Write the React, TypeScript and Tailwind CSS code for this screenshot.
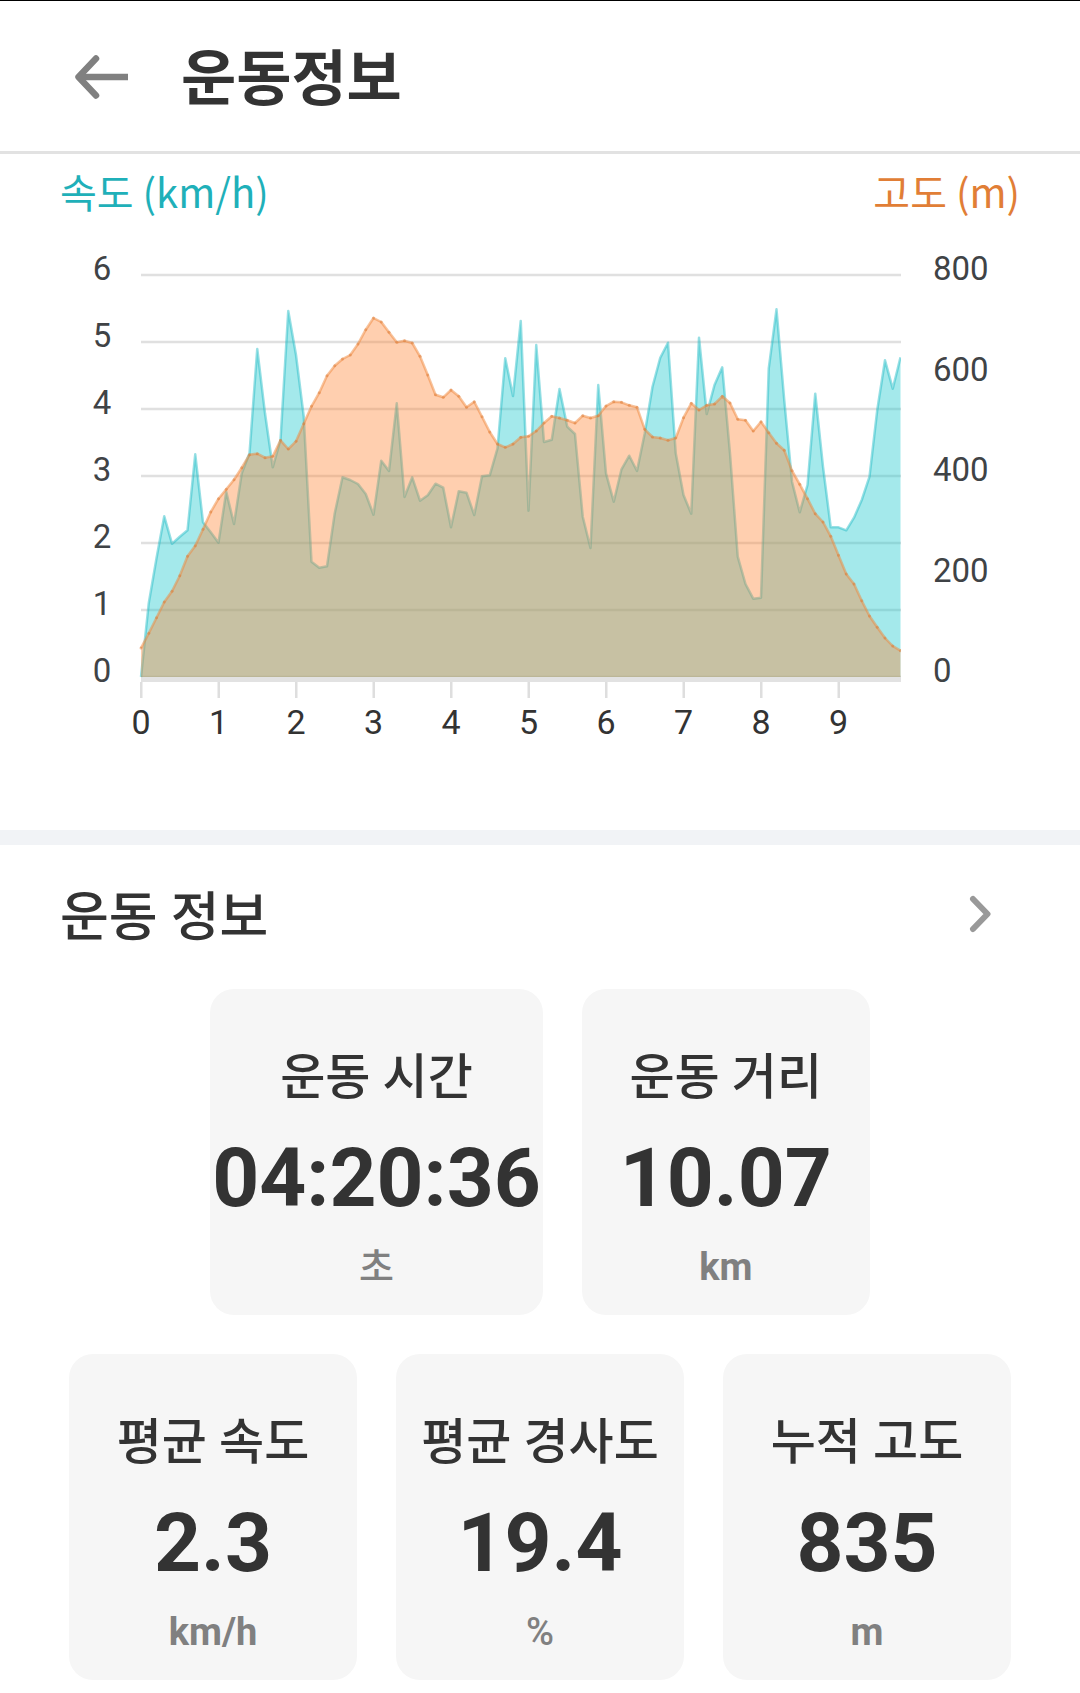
const PLOT = { left: 141, right: 901, top: 275, bottom: 677 };
const SAMPLE_STEP = 7.75;
const UNIT = 3;

// One sample every 0.1 km, as a depth below y = 240 in thirds of a chart unit.
const speed = [
  1311, 1090, 955, 829, 911, 890, 871, 643, 847, 877, 908, 755, 852, 700, 640, 327, 520, 682, 600, 213,
  345, 530, 965, 983, 979, 820, 712, 720, 732, 762, 824, 662, 693, 490, 771, 712, 782, 766, 731, 743,
  862, 754, 758, 825, 709, 706, 625, 355, 468, 243, 812, 315, 606, 599, 447, 560, 582, 830, 924, 435,
  700, 785, 688, 647, 693, 580, 440, 353, 308, 640, 765, 821, 293, 522, 435, 382, 640, 950, 1032, 1076,
  1073, 385, 208, 480, 725, 817, 735, 461, 680, 862, 862, 871, 833, 780, 710, 510, 361, 446, 352,
];

const altitude = [
  1224, 1180, 1133, 1086, 1054, 1007, 949, 917, 868, 816, 776, 748, 719, 683, 644, 641, 653, 649, 601, 627,
  604, 551, 499, 458, 407, 377, 357, 345, 312, 269, 234, 246, 277, 307, 302, 309, 349, 405, 464, 472,
  450, 469, 502, 485, 530, 576, 612, 622, 612, 592, 589, 573, 549, 529, 534, 541, 549, 527, 534, 527,
  498, 485, 487, 496, 502, 568, 591, 594, 601, 594, 533, 490, 510, 496, 492, 469, 489, 538, 541, 573,
  545, 578, 610, 631, 692, 733, 776, 821, 846, 889, 946, 1002, 1032, 1082, 1128, 1162, 1194, 1218, 1232,
];

const toPoints = (data: number[]) => data.map((d, i) => [PLOT.left + i * SAMPLE_STEP, 240 + d / UNIT]);
const toLine = (data: number[]) => toPoints(data).map(([x, y]) => `${x},${y.toFixed(1)}`).join(" ");
const toArea = (data: number[]) =>
  `${PLOT.left},${PLOT.bottom} ${toLine(data)} ${PLOT.left + (data.length - 1) * SAMPLE_STEP},${PLOT.bottom}`;

function Chart() {
  return (
    <svg viewBox="0 230 1080 520" className="block w-full" role="img" aria-label="속도와 고도 그래프">
      <defs>
        <clipPath id="plot">
          <rect x={PLOT.left - 2} y="240" width={PLOT.right - PLOT.left + 2} height="438" />
        </clipPath>
      </defs>
      {[0, 1, 2, 3, 4, 5, 6].map((v) => (
        <g key={v}>
          <line
            x1={PLOT.left}
            x2={PLOT.right}
            y1={PLOT.bottom - v * 67}
            y2={PLOT.bottom - v * 67}
            className="stroke-[#e0e0e0]"
            strokeWidth="2.5"
          />
          <text x="102" y={682 - v * 67} textAnchor="middle" className="fill-[#3f4346] text-[33px]">
            {v}
          </text>
        </g>
      ))}
      <rect x={PLOT.left} y="677" width={PLOT.right - PLOT.left} height="5" className="fill-[#e2e2e2]" />
      {[0, 1, 2, 3, 4, 5, 6, 7, 8, 9].map((v) => (
        <g key={v}>
          <rect x={PLOT.left - 1 + v * 77.5} y="682" width="2.5" height="16" className="fill-[#dedede]" />
          <text
            x={PLOT.left + v * 77.5}
            y="734"
            textAnchor="middle"
            className="fill-[#333333] text-[34px]"
          >
            {v}
          </text>
        </g>
      ))}
      {[0, 200, 400, 600, 800].map((v) => (
        <text key={v} x="933" y={682 - v * 0.5025} className="fill-[#3f4346] text-[33px]">
          {v}
        </text>
      ))}
      <g clipPath="url(#plot)" strokeWidth="2.5" strokeLinejoin="round">
        <polygon points={toArea(speed)} className="fill-[#1bc8cd]/40" />
        <polyline points={toLine(speed)} fill="none" className="stroke-[#1bb8c4]/45" />
        <polygon points={toArea(altitude)} className="fill-[#ff8430]/39" />
        <polyline points={toLine(altitude)} fill="none" className="stroke-[#f0873c]/50" />
        {toPoints(altitude).map(([x, y]) => (
          <circle key={x} cx={x} cy={y} r="1.5" className="fill-[#d9762f]/45" />
        ))}
      </g>
    </svg>
  );
}

type Stat = { label: string; value: string; unit: string; thinUnit?: boolean };

const rows: Stat[][] = [
  [
    { label: "운동 시간", value: "04:20:36", unit: "초", thinUnit: true },
    { label: "운동 거리", value: "10.07", unit: "km" },
  ],
  [
    { label: "평균 속도", value: "2.3", unit: "km/h" },
    { label: "평균 경사도", value: "19.4", unit: "%", thinUnit: true },
    { label: "누적 고도", value: "835", unit: "m" },
  ],
];

function StatCard({ label, value, unit, thinUnit }: Stat) {
  return (
    <div className="flex min-w-72 flex-col items-center rounded-3xl bg-[#f6f6f6] px-[2px] pt-[59px] pb-[26px] text-center">
      <dt className="text-[49px] leading-[60px] font-medium text-[#333333]">{label}</dt>
      <dd className="mt-[26px] text-[82px] leading-[88px] font-bold text-[#333333]">{value}</dd>
      <dd
        className={
          thinUnit
            ? "mt-[23px] text-[38px] leading-[44px] font-medium text-[#808080]"
            : "mt-[23px] text-[38px] leading-[44px] font-bold text-[#808080]"
        }
      >
        {unit}
      </dd>
    </div>
  );
}

export default function App() {
  return (
    <main className="w-full bg-white pb-[13px] font-[Roboto,'Noto_Sans_CJK_KR',sans-serif]">
      <header className="flex items-center gap-[52px] border-t border-b-[3px] border-t-black border-b-[#e2e2e2] px-[75px] pt-[33px] pb-[31px]">
        <button type="button" aria-label="뒤로" className="block">
          <svg viewBox="0 0 54 44" className="block w-[54px]" fill="none" stroke="#808080" strokeWidth="6.5">
            <path d="M4 22H53" />
            <path d="M21 3.5L3.5 22L21 40.5" strokeLinecap="round" strokeLinejoin="round" />
          </svg>
        </button>
        <h1 className="pt-[6px] text-[60px] leading-[80px] font-bold text-[#333333]">운동정보</h1>
      </header>

      <section className="pb-20">
        <div className="flex justify-between px-15 pt-[7px] pb-[9px] font-['Noto_Sans_CJK_KR',sans-serif] text-[40px] leading-[60px]">
          <span className="text-[#1fb0b9]">속도 (km/h)</span>
          <span className="text-[#e17e36]">고도 (m)</span>
        </div>
        <Chart />
      </section>

      <div className="h-[15px] bg-[#f1f3f6]" />

      <section>
        <div className="flex items-center justify-between pt-[33px] pr-[88px] pb-[39px] pl-15">
          <h2 className="pt-2 text-[53px] leading-[64px] font-medium text-[#333333]">운동 정보</h2>
          <button type="button" aria-label="운동 정보 더보기" className="block">
            <svg viewBox="0 0 24 38" className="block w-6" fill="none" stroke="#999999" strokeWidth="6">
              <path d="M5 4L19.500 19L5 34" strokeLinecap="round" strokeLinejoin="round" />
            </svg>
          </button>
        </div>
        <div className="flex flex-col gap-[39px]">
          {rows.map((row) => (
            <dl key={row[0].label} className="flex justify-center gap-[39px]">
              {row.map((stat) => (
                <StatCard key={stat.label} {...stat} />
              ))}
            </dl>
          ))}
        </div>
      </section>
    </main>
  );
}
